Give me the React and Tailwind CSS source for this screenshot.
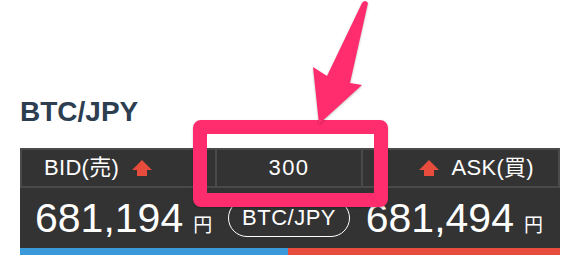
const UpArrow = () => (
  <svg width="20" height="16" viewBox="0 0 20 16" className="shrink-0">
    <polygon points="10,0 20,10 15,10 15,16 5,16 5,10 0,10" fill="#e74c3c" />
  </svg>
);

const Price = ({ value }) => (
  <div className="flex items-baseline gap-[10px]">
    <span className="text-[41px] leading-none text-white">{value}</span>
    <span className="text-[19px] leading-none text-white font-['Noto_Sans_CJK_JP',sans-serif]">円</span>
  </div>
);

export default function App() {
  return (
    <div className="relative w-[586px] h-[270px] bg-white overflow-hidden font-['Liberation_Sans','Noto_Sans_CJK_JP',sans-serif]">
      <div className="px-[20px] pt-[98px]">
        <h1 className="text-[28px] leading-[28px] font-bold text-[#2c3e50]">BTC/JPY</h1>

        <div className="mt-[22px] w-[540px] bg-[#333333]">
          {/* header */}
          <div className="flex h-[40px] border border-[#4a4a4a] text-white text-[22px] leading-none">
            <div className="flex-1 flex items-center gap-[13px] pl-[22px] border border-[#4a4a4a]">
              <span className="tracking-[0.3px]">BID(売)</span>
              <UpArrow />
            </div>
            <div className="w-[146px] flex items-center justify-center border border-[#4a4a4a] tracking-[1.5px]">
              300
            </div>
            <div className="flex-1 flex items-center justify-end gap-[13px] pr-[24px] border border-[#4a4a4a]">
              <UpArrow />
              <span className="tracking-[0.3px]">ASK(買)</span>
            </div>
          </div>

          {/* prices */}
          <div className="flex items-center justify-between h-[60px] pl-[15px] pr-[17px]">
            <Price value="681,194" />
            <div className="h-[38px] px-[13px] flex items-center rounded-full border-[1.5px] border-white text-white text-[22px] leading-none tracking-[0.5px]">
              BTC/JPY
            </div>
            <Price value="681,494" />
          </div>

          {/* bars */}
          <div className="flex h-[7px]">
            <div className="w-[268px] bg-[#3a9ad9]" />
            <div className="flex-1 bg-[#e74c3c]" />
          </div>
        </div>
      </div>

      {/* annotation highlight */}
      <div className="absolute left-[193px] top-[120px] w-[195px] h-[87px] border-[14px] border-[#ff2d6e] rounded-[8px] shadow-[0_1px_2px_rgba(0,0,0,0.25)]" />
      <svg className="absolute left-[290px] top-0" width="90" height="130" viewBox="0 0 90 130">
        <path
          d="M72 3 Q75 -1 78 3 L60 83 L72 85 L29 124 L23 67 L37 76 Z"
          fill="#ff2d6e"
          style={{ filter: "drop-shadow(0 1px 1px rgba(0,0,0,0.25))" }}
        />
      </svg>
    </div>
  );
}
